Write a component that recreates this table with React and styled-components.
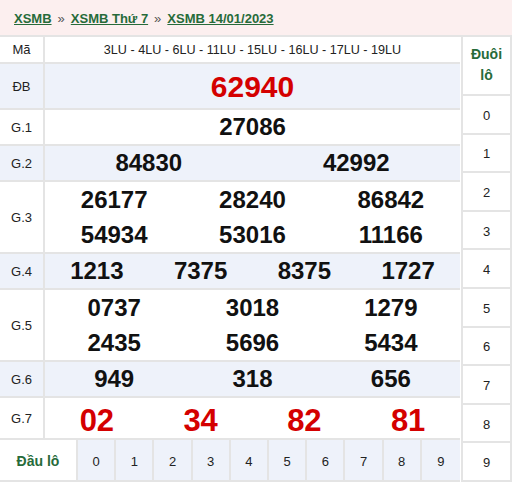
import React from "react";
import styled, { createGlobalStyle } from "styled-components";

const Global = createGlobalStyle`
  html, body { margin: 0; padding: 0; background: #fff; }
  body { font-family: "Liberation Sans", Arial, sans-serif; }
`;

const BORDER = "#e4e4e4";
const BLUE = "#eef2fa";

const Page = styled.div`
  width: 512px;
  height: 482px;
  overflow: hidden;
`;

const Crumbs = styled.div`
  height: 35px;
  background: #fcefef;
  display: flex;
  align-items: center;
  padding-left: 14px;
  font-size: 13px;
  font-weight: bold;
  gap: 5px;
  box-sizing: border-box;
  padding-top: 2px;
`;

const Crumb = styled.a`
  color: #276b3a;
  text-decoration: underline;
`;

const Sep = styled.span`
  color: #555;
  font-weight: normal;
  margin: 0 1px;
`;

const Body = styled.div`
  display: flex;
  border-top: 2px solid ${BORDER};
  height: 447px;
`;

const Main = styled.div`
  width: 460px;
  display: flex;
  flex-direction: column;
`;

const Row = styled.div`
  display: grid;
  grid-template-columns: 45px 1fr;
  height: ${(p) => p.$h}px;
  flex-shrink: 0;
  border-bottom: 2px solid ${BORDER};
  background: ${(p) => (p.$blue ? BLUE : "#fff")};
`;

const Label = styled.div`
  border-right: 2px solid ${BORDER};
  display: flex;
  align-items: center;
  justify-content: center;
  font-size: 13px;
  color: #222;
`;

const Codes = styled.div`
  display: flex;
  align-items: center;
  justify-content: center;
  font-size: 12.6px;
  color: #222;
`;

const Nums = styled.div`
  display: grid;
  grid-template-columns: repeat(${(p) => p.$cols}, 1fr);
  align-items: center;
  justify-items: center;
  font-weight: bold;
  font-size: ${(p) => p.$size}px;
  color: ${(p) => (p.$red ? "#d40000" : "#111")};
  padding-top: ${(p) => p.$offset || 0}px;
`;

const HeadRow = styled.div`
  display: grid;
  grid-template-columns: 78px repeat(10, 1fr);
  height: 40px;
  flex-shrink: 0;
  border-bottom: 2px solid ${BORDER};
`;

const HeadLabel = styled.div`
  display: flex;
  align-items: center;
  justify-content: center;
  padding-top: 2px;
  font-weight: bold;
  font-size: 14px;
  color: #276b3a;
  background: #fff;
  border-right: 2px solid ${BORDER};
`;

const HeadCell = styled.div`
  display: flex;
  align-items: center;
  justify-content: center;
  padding-top: 2px;
  font-size: 13px;
  color: #222;
  background: ${BLUE};
  border-right: 2px solid ${BORDER};
  &:last-child { border-right: none; }
`;

const Side = styled.div`
  margin-left: 1px;
  flex: 1;
  display: flex;
  flex-direction: column;
  border-left: 2px solid ${BORDER};
  border-right: 2px solid ${BORDER};
  margin-top: -1px;
  height: 446px;
`;

const SideHead = styled.div`
  height: 58px;
  flex-shrink: 0;
  border-bottom: 2px solid ${BORDER};
  display: flex;
  align-items: center;
  justify-content: center;
  text-align: center;
  font-weight: bold;
  font-size: 14px;
  line-height: 21px;
  color: #276b3a;
`;

const SideCell = styled.div`
  flex: 1;
  border-bottom: 2px solid ${BORDER};
  display: flex;
  align-items: center;
  justify-content: center;
  padding-top: 2px;
  font-size: 13px;
  color: #222;
`;

const prizes = [
  { label: "ĐB", h: 44, blue: true, cols: 1, nums: ["62940"], size: 30, red: true, offset: 2 },
  { label: "G.1", h: 34, cols: 1, nums: ["27086"], size: 24 },
  { label: "G.2", h: 34, blue: true, cols: 2, nums: ["84830", "42992"], size: 24 },
  { label: "G.3", h: 70, cols: 3, nums: ["26177", "28240", "86842", "54934", "53016", "11166"], size: 24 },
  { label: "G.4", h: 34, blue: true, cols: 4, nums: ["1213", "7375", "8375", "1727"], size: 24 },
  { label: "G.5", h: 70, cols: 3, nums: ["0737", "3018", "1279", "2435", "5696", "5434"], size: 24 },
  { label: "G.6", h: 34, blue: true, cols: 3, nums: ["949", "318", "656"], size: 24 },
  { label: "G.7", h: 40, cols: 4, nums: ["02", "34", "82", "81"], red: true, size: 31, offset: 5 },
];

export default function App() {
  const digits = [0, 1, 2, 3, 4, 5, 6, 7, 8, 9];
  return (
    <Page>
      <Global />
      <Crumbs>
        <Crumb>XSMB</Crumb>
        <Sep>»</Sep>
        <Crumb>XSMB Thứ 7</Crumb>
        <Sep>»</Sep>
        <Crumb>XSMB 14/01/2023</Crumb>
      </Crumbs>
      <Body>
        <Main>
          <Row $h={25}>
            <Label>Mã</Label>
            <Codes>3LU - 4LU - 6LU - 11LU - 15LU - 16LU - 17LU - 19LU</Codes>
          </Row>
          {prizes.map((p) => (
            <Row key={p.label} $h={p.h} $blue={p.blue}>
              <Label>{p.label}</Label>
              <Nums $cols={p.cols} $size={p.size} $red={p.red} $offset={p.offset}>
                {p.nums.map((n, i) => (
                  <span key={i}>{n}</span>
                ))}
              </Nums>
            </Row>
          ))}
          <HeadRow>
            <HeadLabel>Đầu lô</HeadLabel>
            {digits.map((d) => (
              <HeadCell key={d}>{d}</HeadCell>
            ))}
          </HeadRow>
        </Main>
        <Side>
          <SideHead>
            Đuôi
            <br />
            lô
          </SideHead>
          {digits.map((d) => (
            <SideCell key={d}>{d}</SideCell>
          ))}
        </Side>
      </Body>
    </Page>
  );
}
